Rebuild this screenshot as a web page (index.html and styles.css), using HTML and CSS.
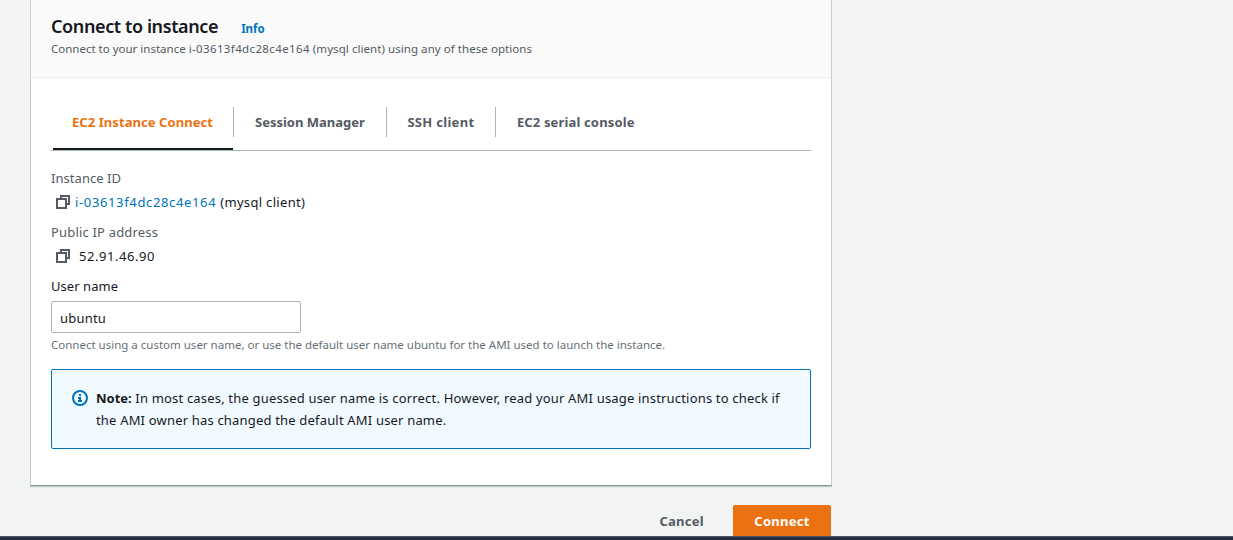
FILE: index.html
```html
<!DOCTYPE html>
<html lang="en">
<head>
<meta charset="utf-8">
<title>Connect to instance</title>
<link rel="stylesheet" href="styles.css">
</head>
<body>
<main class="page">
  <section class="card">
    <header class="card-header">
      <div class="title-row"><h1>Connect to instance</h1><a class="info">Info</a></div>
      <p class="subtitle">Connect to your instance <span class="sub-id">i-03613f4dc28c4e164</span> <span class="sub-end">(mysql client) using any of these options</span></p>
    </header>
    <div class="card-body">
      <nav class="tabs">
        <a class="tab active">EC2 Instance Connect</a>
        <a class="tab">Session Manager</a>
        <a class="tab ssh">SSH client</a>
        <a class="tab serial">EC2 serial console</a>
      </nav>
      <div class="label">Instance ID</div>
      <div class="value"><svg class="copy" viewBox="0 0 16 16"><path d="M6 5V2h8v8h-3M2 5h9v9H2z"/></svg><a class="link">i-03613f4dc28c4e164</a><span class="after">(mysql client)</span></div>
      <div class="label wide">Public IP address</div>
      <div class="value ip"><svg class="copy" viewBox="0 0 16 16"><path d="M6 5V2h8v8h-3M2 5h9v9H2z"/></svg><span>52.91.46.90</span></div>
      <label class="label dark" for="user">User name</label>
      <input id="user" class="field" value="ubuntu">
      <p class="hint">Connect using a custom user name, or use the default user name ubuntu for the AMI used to launch the instance.</p>
      <div class="note">
        <svg class="note-icon" viewBox="0 0 16 16"><circle cx="8" cy="8" r="7"/><path d="M7 5h2M6 8h2v3M6 11h4"/></svg>
        <p><b>Note:</b> In most cases, the guessed user name is correct. However, read your AMI usage instructions to check if<br>the AMI owner has changed the default AMI user name.</p>
      </div>
    </div>
  </section>
  <div class="actions"><button class="btn">Cancel</button><button class="btn primary">Connect</button></div>
</main>
<footer class="footer"></footer>
</body>
</html>
```
FILE: styles.css
```css
* { box-sizing: border-box; }
body { margin: 0; height: 540px; overflow: hidden; display: flex; flex-direction: column; background: #f2f3f3; color: #16191f; font: 13px/22px "Noto Sans", sans-serif; }
h1, p { margin: 0; }
.page { width: 802px; margin-left: 30px; height: 536px; flex: none; overflow: hidden; }
.card { height: 486px; background: #fff; border: 1px solid #c9cece; border-top: 0; border-bottom-color: #879596; box-shadow: 0 1px 1px rgba(0, 28, 36, .2); }
.card-header { height: 78px; padding: 15px 20px 0; background: #fafafa; border-bottom: 1px solid #eaeded; }
.title-row { display: flex; align-items: center; gap: 23px; height: 22px; }
h1 { font-size: 18px; line-height: 22px; font-weight: 600; letter-spacing: -.39px; }
.info { color: #0073bb; font-size: 11.5px; font-weight: 700; padding-top: 5px; }
.subtitle { font-size: 11.5px; line-height: 24px; color: #545b64; white-space: nowrap; }
.sub-id { letter-spacing: .37px; }
.sub-end { letter-spacing: .06px; }
.card-body { padding: 29px 20px 0; }
.tabs { display: flex; height: 44px; border-bottom: 1px solid #aab7b8; margin-bottom: 16px; }
.tab { height: 30px; padding: 4px 21px; border-left: 1px solid #aab7b8; color: #545b64; font-weight: 700; white-space: nowrap; }
.tab.active { border-left: 0; color: #ec7211; width: 180px; height: 43px; padding: 4px 19px; margin-left: 2px; border-bottom: 2px solid #16191f; letter-spacing: .07px; }
.ssh { padding: 4px 20.5px; letter-spacing: .3px; }
.serial { letter-spacing: .15px; }
.label { display: block; color: #545b64; height: 22px; letter-spacing: .05px; }
.label.wide { letter-spacing: .18px; }
.label.dark { color: #16191f; }
.value { display: flex; align-items: center; height: 22px; margin: 2px 0 8px 4px; gap: 4px; }
.ip { gap: 8px; letter-spacing: .55px; }
.copy { width: 16px; height: 16px; fill: none; stroke: #545b64; stroke-width: 2; }
.link { color: #0073bb; letter-spacing: .64px; }
.after { letter-spacing: .32px; }
.field { display: block; width: 250px; height: 32px; margin-top: 4px; padding: 2px 8px 0; border: 1px solid #aab7b8; border-radius: 2px; font: inherit; letter-spacing: .2px; color: #16191f; }
.hint { font-size: 11.5px; color: #687078; margin-top: 1px; white-space: nowrap; }
.note { display: flex; gap: 8px; height: 80px; margin-top: 13px; padding: 17px 20px; background: #f1faff; border: 1px solid #0073bb; border-radius: 2px; white-space: nowrap; letter-spacing: .18px; }
.note b { letter-spacing: 0; }
.note-icon { width: 16px; height: 16px; margin-top: 3px; fill: none; stroke: #0073bb; stroke-width: 2; }
.actions { display: flex; justify-content: flex-end; padding: 19px 1px 0 0; }
.btn { height: 32px; padding: 0 21px; border: 0; background: none; color: #545b64; font: 700 13px/22px "Noto Sans", sans-serif; letter-spacing: .28px; }
.primary { background: #ec7211; color: #fff; border-radius: 2px; margin-left: 8px; width: 98px; }
.footer { height: 4px; background: #232f3e; border-top: 1px solid #4b5563; }
```
